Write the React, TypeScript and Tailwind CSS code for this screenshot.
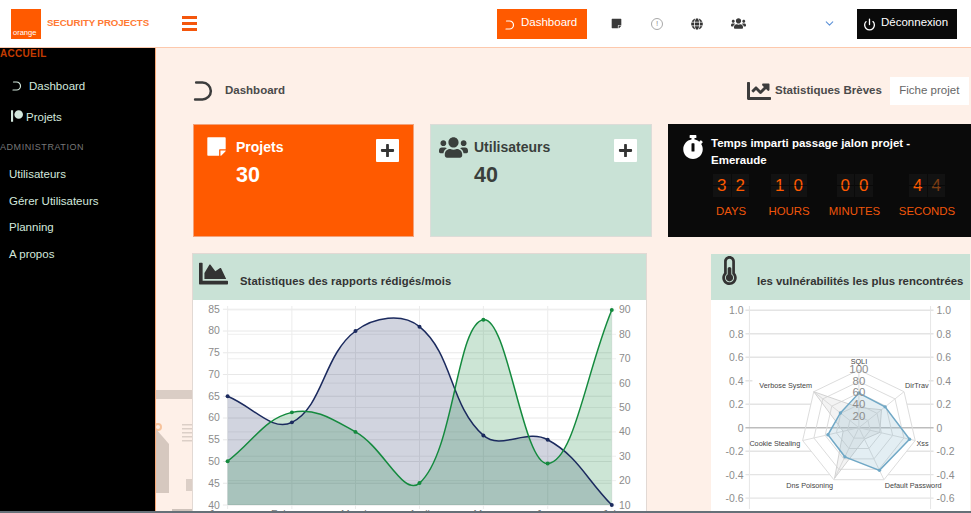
import React from "react";
import { FaChartArea, FaChartLine, FaGlobe, FaPatreon, FaPlus, FaStickyNote, FaStopwatch, FaThermometerHalf, FaUsers } from "react-icons/fa";
import { ChevronDown, Power } from "lucide-react";

const FONT = "font-['Liberation_Sans','Arial',sans-serif]";

function DashIcon({ className = "" }: { className?: string }) {
  return (
    <svg viewBox="0 0 20 20" className={className} fill="none" stroke="currentColor" strokeWidth="2.4" strokeLinecap="round">
      <path d="M3 2 H9 A8 8 0 0 1 9 18 H2" />
    </svg>
  );
}

type Pt = [number, number];
function spline(pts: Pt[], t = 0.4) {
  const c: { a: Pt; b: Pt }[] = pts.map((p, i) => {
    const p0 = pts[Math.max(i - 1, 0)];
    const p2 = pts[Math.min(i + 1, pts.length - 1)];
    const d01 = Math.hypot(p[0] - p0[0], p[1] - p0[1]);
    const d12 = Math.hypot(p2[0] - p[0], p2[1] - p[1]);
    const s = d01 + d12 || 1;
    const fa = (t * d01) / s;
    const fb = (t * d12) / s;
    return {
      a: [p[0] - fa * (p2[0] - p0[0]), p[1] - fa * (p2[1] - p0[1])] as Pt,
      b: [p[0] + fb * (p2[0] - p0[0]), p[1] + fb * (p2[1] - p0[1])] as Pt,
    };
  });
  let d = `M${pts[0][0]} ${pts[0][1]}`;
  for (let i = 1; i < pts.length; i++) {
    d += ` C${c[i - 1].b[0]} ${c[i - 1].b[1]} ${c[i].a[0]} ${c[i].a[1]} ${pts[i][0]} ${pts[i][1]}`;
  }
  return d;
}

const XS = [226.7, 291.3, 355.2, 419.5, 483.7, 548.3, 612.7];
const BOTTOM = 506;
const yL = (v: number) => 309.3 + ((85 - v) / 45) * (BOTTOM - 309.3);
const yR = (v: number) => 310 + ((90 - v) / 80) * (BOTTOM - 310);
const BLUE = [65, 59, 80, 81, 56, 55, 40].map((v, i) => [XS[i], yL(v)] as Pt);
const GREEN = [28, 48, 40, 19, 86, 27, 90].map((v, i) => [XS[i], yR(v)] as Pt);
const MONTHS = ["January", "February", "March", "April", "May", "June", "July"];

function LineChart() {
  const lefts = [85, 80, 75, 70, 65, 60, 55, 50, 45, 40];
  const rights = [90, 80, 70, 60, 50, 40, 30, 20, 10];
  const bd = spline(BLUE);
  const gd = spline(GREEN);
  return (
    <svg viewBox="193 300 453 212" width="453" height="212" className="block">
      {lefts.map((v) => (
        <line key={v} x1="222" x2="613" y1={yL(v)} y2={yL(v)} stroke="#e8e8e8" strokeWidth="1" />
      ))}
      {rights.map((v) => (
        <line key={v} x1="227" x2="617" y1={yR(v)} y2={yR(v)} stroke="#efefef" strokeWidth="1" />
      ))}
      {XS.map((x) => (
        <line key={x} x1={x} x2={x} y1="306" y2="510" stroke="#ececec" strokeWidth="1" />
      ))}
      <path d={`${bd} L612.7 ${BOTTOM} L226.7 ${BOTTOM} Z`} fill="#1b2a5e" fillOpacity="0.2" />
      <path d={`${gd} L612.7 ${BOTTOM} L226.7 ${BOTTOM} Z`} fill="#188a42" fillOpacity="0.22" />
      <path d={bd} fill="none" stroke="#1b2a5e" strokeWidth="1.5" />
      <path d={gd} fill="none" stroke="#148a3e" strokeWidth="1.5" />
      {BLUE.map((p, i) => (
        <circle key={i} cx={p[0]} cy={p[1]} r="2" fill="#1b2a5e" />
      ))}
      {GREEN.map((p, i) => (
        <circle key={i} cx={p[0]} cy={p[1]} r="2" fill="#148a3e" />
      ))}
      {lefts.map((v) => (
        <text key={v} x="219" y={yL(v) + 3.5} textAnchor="end" fontSize="10.5" fill="#8c8c8c">{v}</text>
      ))}
      {rights.map((v) => (
        <text key={v} x="620" y={yR(v) + 3.5} fontSize="10.5" fill="#8c8c8c">{v}</text>
      ))}
      {MONTHS.map((m, i) => (
        <text key={m} x={XS[i]} y="519" textAnchor="middle" fontSize="10.5" fill="#777">{m}</text>
      ))}
    </svg>
  );
}

const CX = 859;
const CY = 428.3;
const R = 58;
const radarPt = (i: number, v: number): Pt => {
  const a = -Math.PI / 2 + (i * 2 * Math.PI) / 7;
  const r = (v / 100) * R;
  return [CX + r * Math.cos(a), CY + r * Math.sin(a)];
};
const poly = (vals: number[]) => vals.map((v, i) => radarPt(i, v).join(",")).join(" ");
const RADAR_A = [60, 58, 90, 82, 56, 55, 41];
const RADAR_B = [35, 50, 37, 22, 97, 28, 100];

function RadarChart() {
  const ticks = [1, 0.8, 0.6, 0.4, 0.2, 0, -0.2, -0.4, -0.6];
  const y = (v: number) => 428.3 - (v / 0.2) * 23.6;
  const fmt = (v: number) => (v === 1 ? "1.0" : v === 0 ? "0" : v.toFixed(1));
  const labels: [string, number, number, "start" | "middle" | "end"][] = [
    ["SQLI", 859, 364, "middle"],
    ["DirTrav", 929, 388, "end"],
    ["Xss", 929, 447, "end"],
    ["Default Password", 885, 489, "start"],
    ["Dns Poisoning", 833, 489, "end"],
    ["Cookie Stealing", 800, 447, "end"],
    ["Verbose System", 812, 388, "end"],
  ];
  return (
    <svg viewBox="711 300 259 212" width="259" height="212" className="block">
      {ticks.filter((v) => v !== 0).map((v) => (
        <line key={v} x1="745" x2="934" y1={y(v)} y2={y(v)} stroke="#e4e4e4" strokeWidth="1.4" />
      ))}
      <line x1="749" x2="749" y1="306" y2="510" stroke="#e6e6e6" />
      <line x1="931" x2="931" y1="306" y2="510" stroke="#e6e6e6" />
      {ticks.map((v) => (
        <text key={v} x="743" y={y(v) + 4} textAnchor="end" fontSize="10.5" fill="#8c8c8c">{fmt(v)}</text>
      ))}
      {ticks.map((v) => (
        <text key={v} x="937" y={y(v) + 4} fontSize="10.5" fill="#8c8c8c">{fmt(v)}</text>
      ))}
      <rect x="752" y="375" width="177" height="15" fill="#ffffff" />
      <polygon points={poly([100, 100, 100, 100, 100, 100, 100])} fill="#ffffff" />
      <line x1="745" x2="934" y1={y(0)} y2={y(0)} stroke="#bdbdbd" strokeWidth="1.4" />
      {[20, 40, 60, 80, 100].map((v) => (
        <polygon key={v} points={poly([v, v, v, v, v, v, v])} fill="none" stroke="#dcdcdc" strokeWidth="1" />
      ))}
      {[0, 1, 2, 3, 4, 5, 6].map((i) => {
        const p = radarPt(i, 100);
        return <line key={i} x1={CX} y1={CY} x2={p[0]} y2={p[1]} stroke="#dedede" />;
      })}
      <polygon points={poly(RADAR_B)} fill="#c9c9c9" fillOpacity="0.22" stroke="#d2d2d2" strokeWidth="1" />
      <polygon points={poly(RADAR_A)} fill="#7fb0c9" fillOpacity="0.22" stroke="#70a8c6" strokeWidth="1.5" />
      {RADAR_A.map((v, i) => {
        const p = radarPt(i, v);
        return <circle key={i} cx={p[0]} cy={p[1]} r="1.7" fill="#70a8c6" />;
      })}
      {[100, 80, 60, 40, 20].map((v, i) => (
        <text key={v} x={CX} y={373.5 + i * 11.7} textAnchor="middle" fontSize="11.5" fill="#8c8c8c">{v}</text>
      ))}
      {labels.map(([t, x, ly, a]) => (
        <text key={t} x={x} y={ly} textAnchor={a} fontSize="7.3" fill="#444">{t}</text>
      ))}
    </svg>
  );
}

function Backdrop() {
  return (
    <svg viewBox="156 380 38 133" width="38" height="133" className="absolute left-0 top-[332px]">
      <rect x="156" y="390" width="38" height="9" fill="#dacdc5" />
      <circle cx="158" cy="427" r="3" fill="none" stroke="#f7c39c" strokeWidth="2" />
      <polygon points="156,429 169,444 169,493 156,493" fill="#d6c8bf" />
      {[424, 428, 432, 436, 440].map((y) => (
        <rect key={y} x="182" y={y} width="11" height="1.5" fill="#dccfc7" />
      ))}
      <rect x="186" y="479" width="7" height="12" fill="#dccfc7" />
      <rect x="172" y="509" width="21" height="4" fill="#cfc3bb" />
    </svg>
  );
}

function Digit({ d, dim = false }: { d: string; dim?: boolean }) {
  return (
    <div className={`relative flex h-[23px] w-[17.5px] items-center justify-center bg-[#121212] text-[17px] ${dim ? "text-[#7d3d12]" : "text-[#ff5a00]"}`}>
      {d}
      <div className="absolute left-0 right-0 top-[11px] h-px bg-black/50" />
    </div>
  );
}

function Flip({ value, label, dim = false }: { value: string; label: string; dim?: boolean }) {
  return (
    <div className="flex flex-col items-center">
      <div className="flex gap-px">
        <Digit d={value[0]} />
        <Digit d={value[1]} dim={dim} />
      </div>
      <div className="mt-[7px] whitespace-nowrap text-[11.4px] leading-[14px] text-[#f0560a]">{label}</div>
    </div>
  );
}

function PlusBtn() {
  return (
    <div className="flex h-[23px] w-[23px] items-center justify-center rounded-[1px] bg-white text-[#333]">
      <FaPlus className="text-[15px]" />
    </div>
  );
}

function NavItem({ children, className = "" }: { children: React.ReactNode; className?: string }) {
  return <div className={`flex items-center text-[11.5px] leading-[14px] text-[#d3e8dd] ${className}`}>{children}</div>;
}

export default function App() {
  return (
    <div className={`flex h-[513px] w-[971px] flex-col overflow-hidden bg-white ${FONT}`}>
      <header className="flex h-[48px] shrink-0 items-center border-b border-[#fdc9ad] bg-white pl-[11px]">
        <div className="flex h-[30px] w-[30px] flex-col justify-end bg-[#ff5a00] pb-[2px] pl-[2px] text-[7.5px] leading-[8px] text-white">orange</div>
        <div className="ml-[6px] w-[135px] whitespace-nowrap text-[9.7px] font-bold tracking-[-0.1px] text-[#ff7a33]">SECURITY PROJECTS</div>
        <div className="flex w-[15px] flex-col gap-[3.5px]">
          <div className="h-[2.5px] bg-[#f4560c]" />
          <div className="h-[2.5px] bg-[#f4560c]" />
          <div className="h-[2.5px] bg-[#f4560c]" />
        </div>
        <div className="ml-[300px] flex h-[30px] w-[90px] items-center bg-[#ff5a00] pl-[8px] text-[11.5px] text-white">
          <DashIcon className="mr-[6px] mt-[2px] h-[10px] w-[10px]" />
          <span className="-mt-[1px]">Dashboard</span>
        </div>
        <FaStickyNote className="ml-[24px] text-[11px] text-[#3a3a3a]" />
        <div className="ml-[29px] flex h-[12px] w-[12px] items-center justify-center rounded-full border border-[#a8a8a8] text-[8px] leading-none text-[#909090]">!</div>
        <FaGlobe className="ml-[28px] text-[12px] text-[#333]" />
        <FaUsers className="ml-[28px] text-[15px] text-[#3a3a3a]" />
        <ChevronDown className="ml-[77px] h-[13px] w-[13px] text-[#5f93d8]" strokeWidth={2} />
        <div className="ml-[21px] flex h-[30px] w-[100px] items-center bg-[#0a0a0a] pl-[6px] text-[11.5px] text-white">
          <Power className="mr-[5px] mt-[2px] h-[13px] w-[13px]" strokeWidth={2.4} />
          <span className="-mt-[1px]">Déconnexion</span>
        </div>
      </header>

      <div className="flex min-h-0 flex-1">
        <aside className="w-[156px] shrink-0 border-r border-[#f9a878] bg-black">
          <div className="text-[10px] font-bold leading-[12px] tracking-[0.3px] text-[#c43c00]">ACCUEIL</div>
          <NavItem className="mt-[19px] pl-[12px]">
            <DashIcon className="mr-[7px] h-[10px] w-[10px]" />
            Dashboard
          </NavItem>
          <NavItem className="mt-[17px] pl-[11px]">
            <FaPatreon className="mr-[3px] -mt-[3px] text-[12px]" />
            Projets
          </NavItem>
          <div className="mt-[17px] text-[9px] leading-[12px] tracking-[0.55px] text-[#777]">ADMINISTRATION</div>
          <NavItem className="mt-[14px] pl-[9px]">Utilisateurs</NavItem>
          <NavItem className="mt-[12.5px] pl-[9px]">Gérer Utilisateurs</NavItem>
          <NavItem className="mt-[12.5px] pl-[9px]">Planning</NavItem>
          <NavItem className="mt-[12.5px] pl-[9px]">A propos</NavItem>
        </aside>

        <main className="relative flex min-w-0 flex-1 flex-col overflow-hidden bg-[#fef0e8] pl-[37px] pt-[29px]">
          <Backdrop />
          <div className="relative flex h-[28px] shrink-0 items-center text-[#4a4a4a]">
            <DashIcon className="h-[22px] w-[21px] shrink-0 text-[#3c3c3c]" />
            <div className="ml-[11px] whitespace-nowrap text-[11.5px] font-bold">Dashboard</div>
            <FaChartLine className="ml-[462px] shrink-0 text-[24px] text-[#3c3c3c]" />
            <div className="ml-[4px] whitespace-nowrap text-[11.5px] font-bold">Statistiques Brèves</div>
            <div className="ml-[8px] flex h-[28px] w-[79px] shrink-0 items-center justify-center whitespace-nowrap bg-white text-[11.5px] text-[#666]">Fiche projet</div>
          </div>

          <div className="relative mt-[19px] flex h-[113px] shrink-0 gap-[16px]">
            <div className="flex w-[221px] border border-[#f3a27a] bg-[#ff5a00] pl-[12px] pr-[14px] pt-[11px] text-white">
              <FaStickyNote className="text-[21px]" />
              <div className="ml-[9px] flex-1">
                <div className="mt-[2px] text-[14px] font-bold leading-[18px]">Projets</div>
                <div className="mt-[7px] text-[21.5px] font-bold leading-[24px]">30</div>
              </div>
              <div className="mt-[3px]"><PlusBtn /></div>
            </div>
            <div className="flex w-[222px] border border-[#dcdcd8] bg-[#c9e2d6] pl-[8px] pr-[14px] pt-[11px] text-[#3a3f3c]">
              <FaUsers className="text-[29px] -mt-[3px]" />
              <div className="ml-[6px] flex-1">
                <div className="mt-[2px] text-[14px] font-bold leading-[18px]">Utilisateurs</div>
                <div className="mt-[7px] text-[21.5px] font-bold leading-[24px]">40</div>
              </div>
              <div className="mt-[3px]"><PlusBtn /></div>
            </div>
            <div className="flex w-[303px] shrink-0 bg-[#0a0a0a] pl-[13px] pt-[11px] text-white">
              <FaStopwatch className="shrink-0 text-[24px]" />
              <div className="ml-[6px] w-[250px]">
                <div className="text-[11.5px] font-bold leading-[17px]">Temps imparti passage jalon projet - Emeraude</div>
                <div className="-ml-[10px] mt-[5px] grid w-[261px] grid-cols-[60px_56px_75px_70px]">
                  <Flip value="32" label="DAYS" />
                  <Flip value="10" label="HOURS" />
                  <Flip value="00" label="MINUTES" />
                  <Flip value="44" label="SECONDS" dim />
                </div>
              </div>
            </div>
          </div>

          <div className="relative mt-[17px] flex min-h-0 flex-1 gap-[65px]">
            <section className="flex w-[453px] shrink-0 flex-col overflow-hidden bg-white shadow-[0_0_0_1px_#e2d9d4]">
              <div className="flex h-[46px] shrink-0 bg-[#c9e2d6] pl-[6px] pt-[5px] text-[#333]">
                <FaChartArea className="text-[29px]" />
                <div className="ml-[12px] mt-[15px] whitespace-nowrap text-[11.25px] font-bold leading-[14px] tracking-[0.1px]">Statistiques des rapports rédigés/mois</div>
              </div>
              <LineChart />
            </section>
            <section className="flex w-[259px] shrink-0 flex-col overflow-hidden bg-white">
              <div className="flex h-[46px] shrink-0 bg-[#c9e2d6] pl-[4px] pt-[2px] text-[#333]">
                <FaThermometerHalf className="text-[29px]" />
                <div className="ml-[13px] mt-[18px] whitespace-nowrap text-[11.4px] font-bold leading-[14px]">les vulnérabilités les plus rencontrées</div>
              </div>
              <RadarChart />
            </section>
          </div>
        </main>
      </div>
      <div className="h-[2px] shrink-0 bg-[#667078]" />
    </div>
  );
}
